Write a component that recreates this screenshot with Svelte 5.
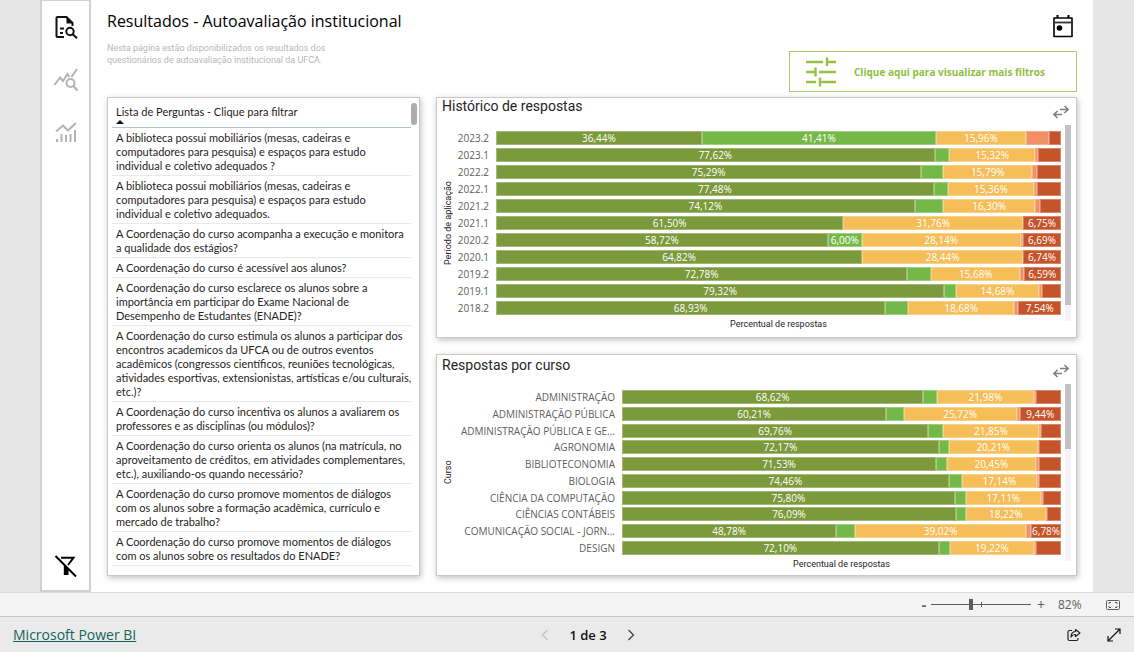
<script lang="ts">
    type Row = { label: string, values: number[] };

    const answers = ['otimo', 'bom', 'regular', 'ruim', 'nao-sei'];

    const history: Row[] = [
        { label: '2023.2', values: [36.44, 41.41, 15.96, 4.1, 2.09] },
        { label: '2023.1', values: [77.62, 2.54, 15.32, 0.45, 4.07] },
        { label: '2022.2', values: [75.29, 3.86, 15.79, 0.9, 4.16] },
        { label: '2022.1', values: [77.48, 2.45, 15.36, 0.5, 4.21] },
        { label: '2021.2', values: [74.12, 5, 16.3, 0.9, 3.68] },
        { label: '2021.1', values: [61.5, 0, 31.76, 0, 6.75] },
        { label: '2020.2', values: [58.72, 6, 28.14, 0.45, 6.69] },
        { label: '2020.1', values: [64.82, 0, 28.44, 0, 6.74] },
        { label: '2019.2', values: [72.78, 4.3, 15.68, 0.65, 6.59] },
        { label: '2019.1', values: [79.32, 2.1, 14.68, 0.5, 3.4] },
        { label: '2018.2', values: [68.93, 4.05, 18.68, 0.8, 7.54] },
    ];

    const courses: Row[] = [
        { label: 'ADMINISTRAÇÃO', values: [68.62, 3.15, 21.98, 0.5, 5.75] },
        { label: 'ADMINISTRAÇÃO PÚBLICA', values: [60.21, 3.97, 25.72, 0.66, 9.44] },
        { label: 'ADMINISTRAÇÃO PÚBLICA E GE...', values: [69.76, 3.35, 21.85, 0.5, 4.54] },
        { label: 'AGRONOMIA', values: [72.17, 2.3, 20.21, 0.4, 4.92] },
        { label: 'BIBLIOTECONOMIA', values: [71.53, 2.4, 20.45, 0.5, 5.12] },
        { label: 'BIOLOGIA', values: [74.46, 2.95, 17.14, 0.5, 4.95] },
        { label: 'CIÊNCIA DA COMPUTAÇÃO', values: [75.8, 2.5, 17.11, 0.5, 4.09] },
        { label: 'CIÊNCIAS CONTÁBEIS', values: [76.09, 2.25, 18.22, 0.3, 3.14] },
        { label: 'COMUNICAÇÃO SOCIAL - JORN...', values: [48.78, 4.3, 39.02, 1.12, 6.78] },
        { label: 'DESIGN', values: [72.1, 2.55, 19.22, 0.5, 5.63] },
    ];

    const questions = [
        'A biblioteca possui mobiliários (mesas, cadeiras e\ncomputadores para pesquisa) e espaços para estudo\nindividual e coletivo adequados ?',
        'A biblioteca possui mobiliários (mesas, cadeiras e\ncomputadores para pesquisa) e espaços para estudo\nindividual e coletivo adequados.',
        'A Coordenação do curso acompanha a execução e monitora\na qualidade dos estágios?',
        'A Coordenação do curso é acessível aos alunos?',
        'A Coordenação do curso esclarece os alunos sobre a\nimportância em participar do Exame Nacional de\nDesempenho de Estudantes (ENADE)?',
        'A Coordenação do curso estimula os alunos a participar dos\nencontros academicos da UFCA ou de outros eventos\nacadêmicos (congressos científicos, reuniões tecnológicas,\natividades esportivas, extensionistas, artísticas e/ou culturais,\netc.)?',
        'A Coordenação do curso incentiva os alunos a avaliarem os\nprofessores e as disciplinas (ou módulos)?',
        'A Coordenação do curso orienta os alunos (na matrícula, no\naproveitamento de créditos, em atividades complementares,\netc.), auxiliando-os quando necessário?',
        'A Coordenação do curso promove momentos de diálogos\ncom os alunos sobre a formação acadêmica, currículo e\nmercado de trabalho?',
        'A Coordenação do curso promove momentos de diálogos\ncom os alunos sobre os resultados do ENADE?',
    ];

    const charts = [
        { id: 'historico', title: 'Histórico de respostas', axis: 'Período de aplicação', rows: history },
        { id: 'curso', title: 'Respostas por curso', axis: 'Curso', rows: courses },
    ];

    let zoom = $state(80);

    // Fatias menores que isso ficam sem rótulo
    const minLabel = 5.9;

    function percent(value: number) {
        return value.toFixed(2).replace('.', ',') + '%';
    }
</script>

<div class="page">
    <div class="stage">
        <main class="report">
            <nav class="rail">
                <button class="icon-button" aria-label="Resultados">
                    <svg width="24" height="24" viewBox="0 0 24 24" fill="none" stroke="#111" stroke-width="2">
                        <path d="M10 22H3.500Q2.500 22 2.500 21V3Q2.500 2 3.500 2H12.500L18.500 8V11" />
                        <path d="M12.500 1.500V8.500H19z" fill="#111" stroke="none" />
                        <path d="M6 13.500H10M6 18H9" />
                        <circle cx="16" cy="16.500" r="3.700" />
                        <path d="M18.700 19.200L23 23.200" />
                    </svg>
                </button>
                <button class="icon-button" aria-label="Análise">
                    <svg width="26" height="24" viewBox="0 0 26 24" fill="none" stroke="#b3b3b3" stroke-width="2">
                        <path d="M1.500 17L7 9.500L10 13L14.500 6L16.500 9M18.500 9L24 1" />
                        <circle cx="17.500" cy="15" r="4" />
                        <path d="M20.400 18L24.500 22.500" />
                    </svg>
                </button>
                <button class="icon-button" aria-label="Indicadores">
                    <svg width="24" height="24" viewBox="0 0 24 24" fill="none" stroke="#b3b3b3" stroke-width="2">
                        <path d="M2 10.500L9 4.500L14 9.500L22 2" />
                        <path d="M3 18V21M7.500 13V21M12 14V21M16.500 13V21M21 9V21" />
                    </svg>
                </button>
                <button class="icon-button clear" aria-label="Limpar filtros">
                    <svg width="24" height="24" viewBox="0 0 24 24">
                        <path d="M7 3.800H19.500L14 11" fill="none" stroke="#000" stroke-width="2" />
                        <path d="M9.800 11L14.500 15V21H9.800z" />
                        <path d="M1.500 2L22 22.500" stroke="#000" stroke-width="2" />
                    </svg>
                </button>
            </nav>

            <div class="content">
                <header class="head">
                    <div class="intro">
                        <h1>Resultados - Autoavaliação institucional</h1>
                        <p>Nesta página estão disponibilizados os resultados dos<br />questionários de autoavaliação institucional da UFCA.</p>
                    </div>
                    <div class="actions">
                        <button class="icon-button" aria-label="Calendário">
                            <svg width="22" height="24" viewBox="0 0 22 24">
                                <path d="M2 3H20V21.500H2z" fill="none" stroke="#000" stroke-width="1.600" stroke-linejoin="round" />
                                <path d="M2 7.500H20" stroke="#333" stroke-width="1.800" />
                                <path d="M5.500 0V3M16.500 0V3" stroke="#000" stroke-width="2" />
                                <circle cx="7.500" cy="13" r="2.800" />
                            </svg>
                        </button>
                        <button class="more-filters">
                            <svg width="30" height="30" viewBox="0 0 30 30" fill="none" stroke="#9bbf45" stroke-width="2.400">
                                <path d="M0 5H17M21 5H30M21 0.500V9" />
                                <path d="M0 15H9M9.500 10.500V19.500M13 15H30" />
                                <path d="M0 25H10M14 20.500V29.500M14 25H30" />
                            </svg>
                            <span>Clique aqui para visualizar mais filtros</span>
                        </button>
                    </div>
                </header>

                <div class="panels">
                    <section class="card questions">
                        <div class="viewport">
                            <table>
                                <thead>
                                    <tr>
                                        <th>
                                            <button>Lista de Perguntas - Clique para filtrar<i class="sort"></i></button>
                                        </th>
                                    </tr>
                                </thead>
                                <tbody>
                                    {#each questions as question}
                                        <tr><td>{question}</td></tr>
                                    {/each}
                                </tbody>
                            </table>
                        </div>
                        <div class="list-scroll"></div>
                    </section>

                    <div class="charts">
                        {#each charts as chart}
                            <section class="card chart {chart.id}">
                                <div class="chart-head">
                                    <h2>{chart.title}</h2>
                                    <button class="icon-button" aria-label="Alternar visualização">
                                        <svg width="16" height="14" viewBox="0 0 16 14" fill="none" stroke="#808080" stroke-width="1.600">
                                            <path d="M7 4.500H15M11.500 1L15 4.500L11.500 8" />
                                            <path d="M9 9.500H1M4.500 6L1 9.500L4.500 13" />
                                        </svg>
                                    </button>
                                </div>
                                <div class="plot">
                                    <span class="y-title">{chart.axis}</span>
                                    <div class="rows">
                                        {#each chart.rows as row}
                                            <div class="row">
                                                <span class="category">{row.label}</span>
                                                <div class="bar">
                                                    {#each row.values as value, i}
                                                        {#if value > 0}
                                                            <span class="slice {answers[i]}" style:width="{value}%">
                                                                {value >= minLabel ? percent(value) : ''}
                                                            </span>
                                                        {/if}
                                                    {/each}
                                                </div>
                                            </div>
                                        {/each}
                                    </div>
                                    <div class="scroll"><div class="thumb"></div></div>
                                </div>
                                <div class="x-title">Percentual de respostas</div>
                            </section>
                        {/each}
                    </div>
                </div>
            </div>
        </main>
    </div>

    <div class="zoom-bar">
        <button class="step" aria-label="Reduzir">-</button>
        <input type="range" min="0" max="200" bind:value={zoom} aria-label="Zoom" />
        <button class="step" aria-label="Ampliar">+</button>
        <span class="zoom-value">82%</span>
        <button class="icon-button" aria-label="Ajustar à página">
            <svg width="14" height="12" viewBox="0 0 14 12" fill="none" stroke="#605e5c">
                <rect x="0.500" y="1.500" width="13" height="9" rx="1" />
                <path d="M5 3.500H3V5M3 7V8.500H5M9 3.500H11V5M11 7V8.500H9" />
            </svg>
        </button>
    </div>

    <footer class="footer">
        <a href="https://powerbi.microsoft.com">Microsoft Power BI</a>
        <div class="pager">
            <button class="icon-button" aria-label="Página anterior" disabled>
                <svg width="8" height="12" viewBox="0 0 8 12" fill="none" stroke="#c4c4c4" stroke-width="1.300"><path d="M6.500 1L1.500 6L6.500 11" /></svg>
            </button>
            <span>1 de 3</span>
            <button class="icon-button" aria-label="Próxima página">
                <svg width="8" height="12" viewBox="0 0 8 12" fill="none" stroke="#444" stroke-width="1.300"><path d="M1.500 1L6.500 6L1.500 11" /></svg>
            </button>
        </div>
        <div class="share">
            <button class="icon-button" aria-label="Compartilhar">
                <svg width="14" height="14" viewBox="0 0 14 14" fill="none" stroke="#222" stroke-width="1.200">
                    <path d="M5 2.500H2.500Q1 2.500 1 4V11Q1 12.500 2.500 12.500H9.500Q11 12.500 11 11V10" />
                    <path d="M8.500 1.500L13 5L8.500 8.500V6.500Q5.500 6.500 4 9Q4 4 8.500 3.500z" stroke-linejoin="round" />
                </svg>
            </button>
            <button class="icon-button" aria-label="Tela cheia">
                <svg width="14" height="14" viewBox="0 0 14 14" fill="none" stroke="#111" stroke-width="1.200">
                    <path d="M1.500 12.500L12.500 1.500M8 1H13V6M1 8V13H6" />
                </svg>
            </button>
        </div>
    </footer>
</div>

<style>
    :global(body) {
        font-family: "Open Sans", "Noto Sans", sans-serif;
        color: #252423;
    }

    .page {
        height: 100vh;
        display: flex;
        flex-direction: column;
    }

    .page * {
        box-sizing: border-box;
    }

    button {
        font: inherit;
        color: inherit;
        border: none;
        background: none;
        padding: 0;
        cursor: pointer;
    }

    .icon-button {
        display: flex;
    }

    .stage {
        flex: 1;
        min-height: 0;
        padding: 0 41px 0 40px;
        background: #e6e6e6;
        display: flex;
    }

    .report {
        flex: 1;
        min-width: 0;
        display: flex;
        background: white;
    }

    .rail {
        width: 51px;
        padding: 14px 0 12px;
        border: 2px solid #d2d2d2;
        border-top-width: 1px;
        display: flex;
        flex-direction: column;
        align-items: center;
        gap: 29px;
    }

    .clear {
        margin-top: auto;
    }

    .content {
        flex: 1;
        min-width: 0;
        padding: 0 16px;
        display: flex;
        flex-direction: column;
    }

    .head {
        display: flex;
        justify-content: space-between;
        height: 97px;
    }

    h1 {
        margin: 11px 0;
        font-size: 16px;
        line-height: 20px;
        font-weight: 400;
        color: black;
    }

    .intro p {
        margin: 0;
        font-family: Roboto, sans-serif;
        font-size: 9px;
        line-height: 12px;
        color: #b8b8b8;
    }

    .actions {
        display: flex;
        flex-direction: column;
        align-items: flex-end;
        gap: 12px;
        padding-top: 15px;
    }

    .actions .icon-button {
        margin-right: 3px;
    }

    .more-filters {
        width: 288px;
        height: 41px;
        padding: 0 16px;
        border: 1px solid #aacb6b;
        display: flex;
        align-items: center;
        gap: 18px;
        font-size: 10px;
        font-weight: 700;
        white-space: nowrap;
        color: #8fc043;
    }

    .panels {
        flex: 1;
        min-height: 0;
        padding-bottom: 16px;
        display: grid;
        grid-template-columns: 313fr 641fr;
        gap: 16px;
    }

    .card {
        border: 1px solid #c8c8c8;
        background: white;
        box-shadow: 1px 2px 6px rgba(0, 0, 0, 0.25);
        min-height: 0;
    }

    .questions {
        display: flex;
        justify-content: space-between;
        padding: 5px 2px 5px 4px;
    }

    .viewport {
        width: 299px;
        overflow: hidden;
    }

    table {
        width: 100%;
        border-collapse: collapse;
        font-family: Lato, sans-serif;
        font-size: 11px;
        line-height: 14px;
    }

    th {
        padding: 2px 4px 3px;
        text-align: left;
        font-weight: 400;
        border-bottom: 1px solid #b3c5cf;
    }

    th button {
        display: block;
        text-align: left;
    }

    .sort {
        display: block;
        width: 0;
        border: 4px solid transparent;
        border-top: none;
        border-bottom-color: #111;
        margin: 1px 0 0;
    }

    td {
        padding: 3px 0 2px 4px;
        white-space: pre;
        border-bottom: 1px solid #e8e8e8;
    }

    .list-scroll {
        width: 6px;
        height: 22px;
        border-radius: 3px;
        background: #adadad;
    }

    .charts {
        min-height: 0;
        display: grid;
        grid-template-rows: 241fr 222fr;
        gap: 16px;
    }

    .chart {
        --label-width: 35px;
        display: flex;
        flex-direction: column;
        padding: 0 5px 5px;
    }

    .curso {
        --label-width: 161px;
        padding: 2px 5px 3px;
    }

    .chart-head {
        height: 32px;
        display: flex;
        justify-content: space-between;
        align-items: flex-start;
    }

    h2 {
        margin: 0;
        font-family: Roboto, sans-serif;
        font-size: 14px;
        line-height: 16px;
        font-weight: 400;
    }

    .chart-head .icon-button {
        margin: 7px 2px 0;
    }

    .plot {
        flex: 1;
        min-height: 0;
        display: flex;
    }

    .y-title {
        width: 12px;
        writing-mode: vertical-rl;
        transform: rotate(180deg);
        text-align: center;
        font-family: Roboto, sans-serif;
        font-size: 9px;
        line-height: 12px;
    }

    .rows {
        flex: 1;
        display: flex;
        flex-direction: column;
    }

    .row {
        flex: 1;
        display: grid;
        grid-template-columns: var(--label-width) 1fr;
        gap: 7px;
        align-items: center;
        font-size: 10px;
        line-height: 14px;
        white-space: nowrap;
    }

    .category {
        text-align: right;
        color: #605e5c;
    }

    .bar {
        height: 14px;
        display: flex;
        color: white;
    }

    .slice {
        text-align: center;
        font-weight: 500;
        box-shadow: inset 0 0 0 1px rgba(255, 255, 255, 0.3);
    }

    .otimo { background: #7b9a3b; }
    .bom { background: #74b947; }
    .regular { background: #f6be59; }
    .ruim { background: #f09064; }
    .nao-sei { background: #c5542a; }

    .scroll {
        width: 6px;
        margin: -5px 0 -5px 4px;
        background: #f3f3f3;
    }

    .thumb {
        height: 92%;
        background: #c2c2c2;
    }

    .curso .thumb {
        height: 37%;
    }

    .x-title {
        padding-left: calc(var(--label-width) + 19px);
        padding-right: 10px;
        text-align: center;
        font-family: Roboto, sans-serif;
        font-size: 9px;
        line-height: 16px;
    }

    .zoom-bar {
        height: 24px;
        padding: 0 14px;
        display: flex;
        align-items: center;
        justify-content: flex-end;
        background: #f4f4f4;
        border-top: 1px solid #dadada;
        color: #605e5c;
    }

    .step {
        width: 20px;
        font-size: 14px;
        line-height: 20px;
    }

    .step:first-child {
        width: 14px;
        font-weight: 700;
    }

    input[type="range"] {
        appearance: none;
        width: 100px;
        height: 12px;
        margin: 0;
        background:
            linear-gradient(#605e5c, #605e5c) center / 1px 5px no-repeat,
            linear-gradient(#605e5c, #605e5c) center / 100% 1px no-repeat;
    }

    input[type="range"]::-webkit-slider-thumb {
        appearance: none;
        width: 4px;
        height: 11px;
        background: #605e5c;
    }

    .zoom-value {
        width: 55px;
        padding-left: 7px;
        font-size: 12px;
    }

    .footer {
        height: 36px;
        padding: 0 13px;
        display: grid;
        grid-template-columns: 1fr auto 1fr;
        align-items: center;
        background: #eaeaea;
        border-top: 1px solid #c6c6c6;
        font-size: 13px;
    }

    .footer a {
        color: #14665a;
        justify-self: start;
        font-size: 14px;
    }

    .pager {
        display: flex;
        align-items: center;
        gap: 20px;
        padding-left: 42px;
        font-weight: 600;
        color: #111;
    }

    .share {
        display: flex;
        justify-content: flex-end;
        gap: 26px;
    }
</style>
